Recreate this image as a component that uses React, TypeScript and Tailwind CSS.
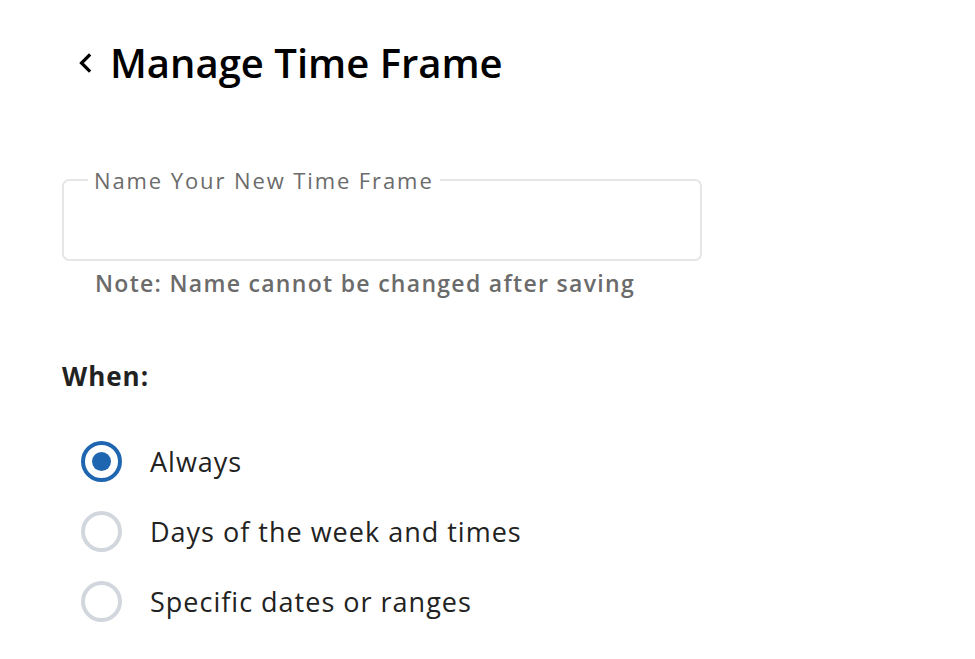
import React, { useState } from 'react';

const OPTIONS = ['Always', 'Days of the week and times', 'Specific dates or ranges'];

export default function App() {
    const [name, setName] = useState('');
    const [when, setWhen] = useState('Always');

    return (
        <div className="min-h-screen bg-white font-['Open_Sans',sans-serif] pl-[62px] pt-[38px]">
            <div className="flex items-center gap-[16px]">
                <button className="flex items-center justify-center w-[18px] h-[24px] ml-[14px] text-black">
                    <svg viewBox="0 0 18 24" className="w-[18px] h-[24px]" fill="none" stroke="currentColor" strokeWidth="3.2" strokeLinecap="square">
                        <path d="M13 4.5 L5.5 12 L13 19.5" />
                    </svg>
                </button>
                <h1 className="text-[40px] font-semibold text-black leading-[50px]">Manage Time Frame</h1>
            </div>

            <fieldset className="mt-[81px] w-[640px] h-[92px] border-[2px] border-[#e6e6e6] rounded-[7px] px-[24px] pb-[8px]">
                <legend className="px-[6px] text-[22px] text-[#6b6b6b] leading-[22px] tracking-[1.9px]">Name Your New Time Frame</legend>
                <input
                    value={name}
                    onChange={(e) => setName(e.target.value)}
                    className="w-full h-[50px] outline-none text-[20px] text-[#222]"
                />
            </fieldset>
            <p className="mt-[8px] ml-[33px] text-[23px] font-semibold text-[#6b6b6b] tracking-[1.3px] leading-[28px]">Note: Name cannot be changed after saving</p>

            <h2 className="mt-[64px] text-[26px] font-bold text-[#222] leading-[30px] tracking-[1px]">When:</h2>

            <div className="mt-[50px] flex flex-col gap-[29px] pl-[19px]">
                {OPTIONS.map((opt) => {
                    const active = when === opt;
                    return (
                        <label key={opt} className="flex items-center gap-[28px] cursor-pointer" onClick={() => setWhen(opt)}>
                            <span className={`flex items-center justify-center w-[41px] h-[41px] rounded-full border-[4px] ${active ? 'border-[#1f66b0]' : 'border-[#d2d7de]'}`}>
                                {active && <span className="w-[19px] h-[19px] rounded-full bg-[#1f66b0]" />}
                            </span>
                            <span className="text-[27px] text-[#222] leading-[40px] tracking-[1px]">{opt}</span>
                        </label>
                    );
                })}
            </div>
        </div>
    );
}
